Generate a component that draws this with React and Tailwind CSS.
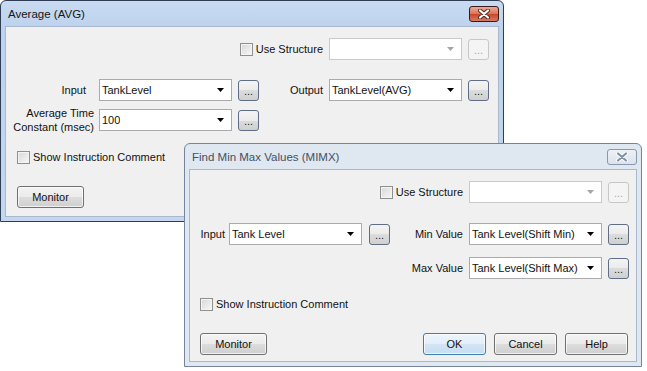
import React from "react";

function Arrow({ disabled }) {
  return (
    <svg width="8" height="4" viewBox="0 0 8 4" className="shrink-0">
      <path d="M0 0H7L3.5 4Z" fill={disabled ? "#a5a5a5" : "#000"} />
    </svg>
  );
}

function Combo({ value, disabled }) {
  return (
    <div
      className={`flex h-[22px] w-[133px] shrink-0 items-center justify-between border bg-white pl-[2px] pr-[6px] ${
        disabled ? "border-[#cacaca]" : "border-[#a9abae]"
      }`}
    >
      <span className="truncate">{value}</span>
      <Arrow disabled={disabled} />
    </div>
  );
}

function Dots({ disabled, className = "" }) {
  return (
    <div
      className={`flex h-[21px] w-[21px] shrink-0 items-end justify-center rounded-[3px] border pb-[3px] text-[11px] leading-[12px] ${
        disabled
          ? "border-[#c7c7c7] bg-[#f4f4f4] text-[#a8a8a8]"
          : "border-[#5f6e86] bg-[linear-gradient(#f4f4f4_0%,#ebebeb_50%,#dcdcdc_50%,#d0d0d0_100%)] text-[#1a1a2a]"
      } ${className}`}
    >
      ...
    </div>
  );
}

function Btn({ children, primary, className = "" }) {
  return (
    <div
      className={`flex h-[22px] shrink-0 items-center justify-center rounded-[3px] border shadow-[inset_0_0_0_1px_rgba(255,255,255,0.7)] ${
        primary
          ? "border-[#3c7fb1] bg-[linear-gradient(#edf5fc_0%,#e3eef9_50%,#d3e4f5_50%,#c8ddf2_100%)]"
          : "border-[#707070] bg-[linear-gradient(#f3f3f3_0%,#ebebeb_50%,#dddddd_50%,#cfcfcf_100%)]"
      } ${className}`}
    >
      {children}
    </div>
  );
}

function Check({ label }) {
  return (
    <div className="flex items-center gap-[3px]">
      <span className="h-[13px] w-[13px] shrink-0 border border-[#8e8f8f] bg-[linear-gradient(135deg,#d8d8d8,#f7f7f7)] shadow-[inset_0_0_0_1px_#f4f4f4]" />
      <span>{label}</span>
    </div>
  );
}

function CloseBtn({ active }) {
  return (
    <div
      className={`flex h-[16px] w-[30px] items-center justify-center rounded-[3px] border ${
        active
          ? "border-[#3a1a14] bg-[linear-gradient(#eaa997_0%,#db7258_50%,#c8442a_50%,#d77a60_100%)]"
          : "border-[#8a98ad] bg-[linear-gradient(#edf1f6,#dbe3ec)]"
      }`}
    >
      <svg width="12" height="10" viewBox="0 0 12 10">
        <path
          d="M2 1.5L10 8.5M10 1.5L2 8.5"
          stroke={active ? "#4a2a24" : "#ffffff"}
          strokeWidth="4"
          strokeLinecap="round"
        />
        <path
          d="M2 1.5L10 8.5M10 1.5L2 8.5"
          stroke={active ? "#ffffff" : "#8391a5"}
          strokeWidth="2.2"
          strokeLinecap="round"
        />
      </svg>
    </div>
  );
}

function Window({ title, active, className, children }) {
  return (
    <div
      className={`absolute flex flex-col rounded-t-[6px] border px-[4px] pb-[4px] ${
        active
          ? "border-[#2f3d55] bg-[linear-gradient(#c9dbf2,#bdd2ed_26px,#c4d7ef)]"
          : "border-[#75849a] bg-[#dfe7f0]"
      } ${className}`}
    >
      <div className="flex h-[25px] shrink-0 items-center justify-between pl-[3px]">
        <span className={`mt-[3px] text-[11.5px] ${active ? "text-[#161616]" : "text-[#445063]"}`}>{title}</span>
        <CloseBtn active={active} />
      </div>
      <div className="flex flex-1 flex-col border border-[#a9b8cc] bg-[#f0f0f0]">{children}</div>
    </div>
  );
}

export default function App() {
  return (
    <div className="relative h-[371px] w-[647px] overflow-hidden bg-white font-['Liberation_Sans',Arial,sans-serif] text-[11px] text-[#111]">
      <Window title="Average (AVG)" active className="left-0 top-0 h-[222px] w-[504px]">
        <div className="mt-[11px] flex h-[22px] items-center">
          <div className="flex w-[323px] justify-end pr-[6px]">
            <Check label="Use Structure" />
          </div>
          <Combo value="" disabled />
          <Dots disabled className="ml-[6px]" />
        </div>

        <div className="mt-[19px] flex h-[22px] items-center">
          <div className="w-[93px] pr-[13px] text-right">Input</div>
          <Combo value="TankLevel" />
          <Dots className="ml-[6px]" />
          <div className="w-[70px] pr-[6px] text-right">Output</div>
          <Combo value="TankLevel(AVG)" />
          <Dots className="ml-[6px]" />
        </div>

        <div className="mt-[8px] flex h-[22px] items-center">
          <div className="w-[93px] pr-[5px] text-right leading-[14px]">
            Average Time
            <br />
            Constant (msec)
          </div>
          <Combo value="100" />
          <Dots className="ml-[6px]" />
        </div>

        <div className="mt-[20px] flex h-[13px] items-center pl-[11px]">
          <Check label="Show Instruction Comment" />
        </div>

        <div className="mt-[22px] flex pl-[11px]">
          <Btn className="w-[67px]">Monitor</Btn>
        </div>
      </Window>

      <Window title="Find Min Max Values (MIMX)" className="left-[184px] top-[143px] h-[224px] w-[458px]">
        <div className="mt-[11px] flex h-[22px] items-center">
          <div className="flex w-[279px] justify-end pr-[6px]">
            <Check label="Use Structure" />
          </div>
          <Combo value="" disabled />
          <Dots disabled className="ml-[6px]" />
        </div>

        <div className="mt-[20px] flex h-[22px] items-center">
          <div className="w-[39px] pr-[4px] text-right">Input</div>
          <Combo value="Tank Level" />
          <Dots className="ml-[7px]" />
          <div className="w-[79px] pr-[6px] text-right">Min Value</div>
          <Combo value="Tank Level(Shift Min)" />
          <Dots className="ml-[6px]" />
        </div>

        <div className="mt-[12px] flex h-[22px] items-center">
          <div className="w-[279px] pr-[6px] text-right">Max Value</div>
          <Combo value="Tank Level(Shift Max)" />
          <Dots className="ml-[6px]" />
        </div>

        <div className="mt-[19px] flex h-[13px] items-center pl-[10px]">
          <Check label="Show Instruction Comment" />
        </div>

        <div className="mt-[22px] flex items-center pl-[10px] pr-[8px]">
          <Btn className="w-[67px]">Monitor</Btn>
          <div className="ml-auto flex gap-[8px]">
            <Btn primary className="w-[63px]">OK</Btn>
            <Btn className="w-[63px]">Cancel</Btn>
            <Btn className="w-[63px]">Help</Btn>
          </div>
        </div>
      </Window>
    </div>
  );
}
